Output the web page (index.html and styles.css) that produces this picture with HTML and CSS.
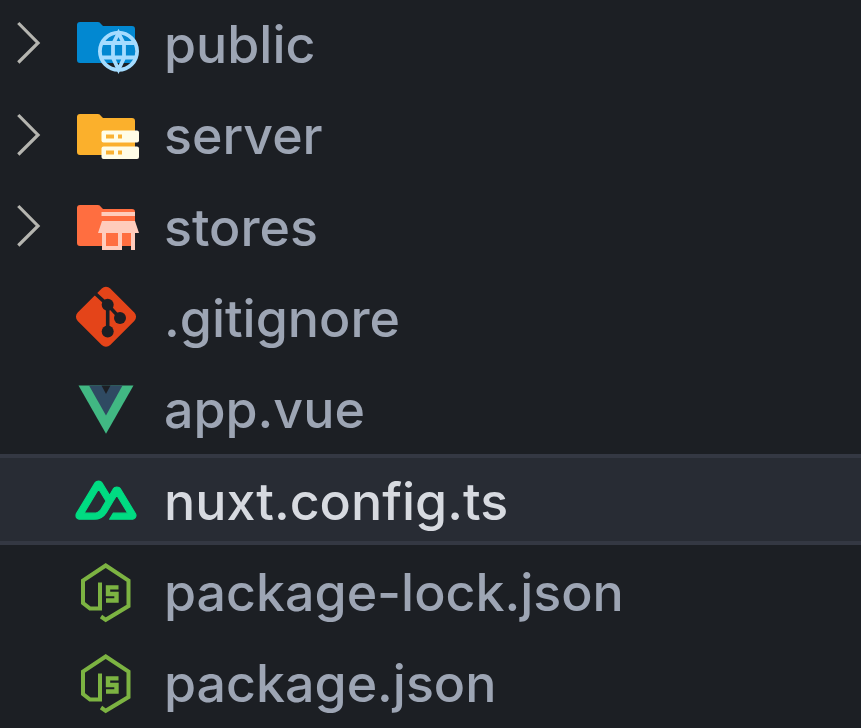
FILE: index.html
```html
<!DOCTYPE html>
<html lang="en">
<head>
<meta charset="utf-8">
<title>Explorer</title>
<link rel="stylesheet" href="styles.css">
</head>
<body>
<ul class="tree">
  <li class="row">
    <svg class="chev" viewBox="0 -3 30 91"><path d="M2.300 23 22 43 2.300 62.500"/></svg>
    <svg class="icon" viewBox="0 -3 70 91"><path class="f-blue" d="M5 25a3 3 0 0 1 3-3h18a4 4 0 0 1 3 2l2 2h29a3 3 0 0 1 3 3v31a3 3 0 0 1-3 3H8a3 3 0 0 1-3-3z"/><circle cx="46.500" cy="51.200" r="18.600" class="globe"/><path class="globe" d="M46.500 33 41 44v14l5.500 11.500L52 58V44zM29 43h35M29 57.500h35"/></svg>
    <span class="name">public</span>
  </li>
  <li class="row">
    <svg class="chev" viewBox="0 -3 30 91"><path d="M2.300 23 22 43 2.300 62.500"/></svg>
    <svg class="icon" viewBox="0 -3 70 91"><path class="f-yellow" d="M5 25a3 3 0 0 1 3-3h18a4 4 0 0 1 3 2l2 2h29a3 3 0 0 1 3 3v31a3 3 0 0 1-3 3H8a3 3 0 0 1-3-3z"/><rect x="29.500" y="38.500" width="37.500" height="12" rx="2" class="s-light"/><rect x="29.500" y="54.500" width="37.500" height="12.500" rx="2" class="s-light"/><path class="s-dot" d="M34 42.500h8v4h-8zM46 42.500h4v4h-4zM34 58.500h8v4h-8zM46 58.500h4v4h-4z"/></svg>
    <span class="name">server</span>
  </li>
  <li class="row">
    <svg class="chev" viewBox="0 -3 30 91"><path d="M2.300 23 22 43 2.300 62.500"/></svg>
    <svg class="icon" viewBox="0 -3 70 91"><path class="f-orange" d="M5 25a3 3 0 0 1 3-3h18a4 4 0 0 1 3 2l2 2h29a3 3 0 0 1 3 3v31a3 3 0 0 1-3 3H8a3 3 0 0 1-3-3z"/><path class="s-peach" d="M29.500 29h33.500v4H29.500zM30 38h33l4 12H26zM30 50h4v13h12V50h4v17H30zM59 50h4v17h-4z"/></svg>
    <span class="name">stores</span>
  </li>
  <li class="row">
    <span class="chev-gap"></span>
    <svg class="icon" viewBox="0 -3 70 91"><rect x="11" y="19.800" width="46" height="46" rx="6" transform="rotate(45 34 42.800)" class="git"/><path class="git-line" d="M21 17.500 35.700 30.800v26.700M35.700 30.800 48 44.100"/><circle cx="35.700" cy="30.800" r="6" class="git-node"/><circle cx="48" cy="44.100" r="6" class="git-node"/><circle cx="35.700" cy="57.500" r="6" class="git-node"/></svg>
    <span class="name">.gitignore</span>
  </li>
  <li class="row">
    <span class="chev-gap"></span>
    <svg class="icon" viewBox="0 -3 70 91"><path class="vue-g" d="M6.500 19.400h55L34 67.800z"/><path class="vue-d" d="M17 19.400h33.500L34 49.400z"/><path class="vue-n" d="M29.500 19.400h9L34 28z"/></svg>
    <span class="name">app.vue</span>
  </li>
  <li class="row active">
    <span class="chev-gap"></span>
    <svg class="icon" viewBox="0 -3 70 91"><path class="nuxt" transform="translate(-2.230 8.400) scale(.1415 .1355)" d="M281.440 397.667H438.320C443.326 397.667 448.118 395.908 452.453 393.427C456.789 390.946 461.258 387.831 463.760 383.533C466.262 379.236 468.002 374.360 468 369.399C467.998 364.437 466.266 359.563 463.760 355.268L357.760 172.947C355.258 168.650 352.201 165.534 347.867 163.053C343.532 160.573 337.325 158.813 332.320 158.813C327.315 158.813 322.521 160.573 318.187 163.053C313.852 165.534 310.795 168.650 308.293 172.947L281.440 219.587L227.733 129.130C225.229 124.834 222.176 120.307 217.840 117.827C213.504 115.346 208.713 115 203.707 115C198.701 115 193.909 115.346 189.573 117.827C185.238 120.307 180.771 124.834 178.267 129.130L46.827 355.268C44.321 359.563 44.002 364.437 44 369.399C43.998 374.360 44.325 379.235 46.827 383.533C49.329 387.830 53.798 390.946 58.133 393.427C62.469 395.908 67.260 397.667 72.267 397.667H171.200C210.401 397.667 238.934 380.082 258.827 346.787L306.880 263.400L332.320 219.587L410.053 352.440H306.880L281.440 397.667ZM169.787 352.440H100.533L203.707 174.360L256 263.400L221.361 323.784C208.151 345.387 193.089 352.440 169.787 352.440Z"/></svg>
    <span class="name">nuxt.config.ts</span>
  </li>
  <li class="row">
    <span class="chev-gap"></span>
    <svg class="icon" viewBox="0 -3 70 91"><path class="js" d="M29 67.500 33.700 70.800 56.500 57V31.500L33.700 16.500 11 31.500V54L18 59.500H28V33.500"/><path class="js js-s" d="M46.500 38.400H36V45H44.500V51.500H34"/></svg>
    <span class="name">package-lock.json</span>
  </li>
  <li class="row">
    <span class="chev-gap"></span>
    <svg class="icon" viewBox="0 -3 70 91"><path class="js" d="M29 67.500 33.700 70.800 56.500 57V31.500L33.700 16.500 11 31.500V54L18 59.500H28V33.500"/><path class="js js-s" d="M46.500 38.400H36V45H44.500V51.500H34"/></svg>
    <span class="name">package.json</span>
  </li>
</ul>
</body>
</html>
```

FILE: styles.css
```css
html, body {
  margin: 0;
  height: 100%;
  background: #1c1f24;
  overflow: hidden;
}
.tree {
  list-style: none;
  margin: -3px 0 0;
  padding: 0;
  font-family: Inter, "Liberation Sans", sans-serif;
}
.row {
  display: flex;
  align-items: center;
  height: 91.4px;
  padding-left: 16px;
  box-sizing: border-box;
  color: #9da5b4;
}
.row.active {
  background: #282c34;
  color: #d7dae0;
  border-top: 4px solid #343843;
  border-bottom: 4px solid #343843;
}
.chev, .chev-gap {
  width: 30px;
  height: 91px;
  flex: none;
  margin-right: 26px;
}
.chev path {
  fill: none;
  stroke: #b5b5b0;
  stroke-width: 3.200;
}
.icon {
  width: 70px;
  height: 91px;
  flex: none;
  margin-right: 22px;
}
.name {
  font-size: 51.900px;
  font-weight: 450;
  line-height: 1;
  padding-top: 4px;
  white-space: nowrap;
}
.f-blue { fill: #0288d1; }
.f-yellow { fill: #fbb02c; }
.f-orange { fill: #ff6e40; }
.globe { fill: none; stroke: #a5dcff; stroke-width: 3.800; }
.s-light { fill: #fffde7; }
.s-dot { fill: #f9b233; }
.s-peach { fill: #ffccbc; }
.git { fill: #e44419; }
.git-line { fill: none; stroke: #1c1f24; stroke-width: 3.600; }
.git-node { fill: #1c1f24; }
.vue-g { fill: #41b883; }
.vue-d { fill: #2f4a62; }
.vue-n { fill: #1c1f24; }
.nuxt { fill: #00dc82; stroke: #00dc82; stroke-width: 8; stroke-linejoin: round; }
.js { fill: none; stroke: #7cb342; stroke-width: 4; }
.js-s { stroke-width: 4.400; }
```
